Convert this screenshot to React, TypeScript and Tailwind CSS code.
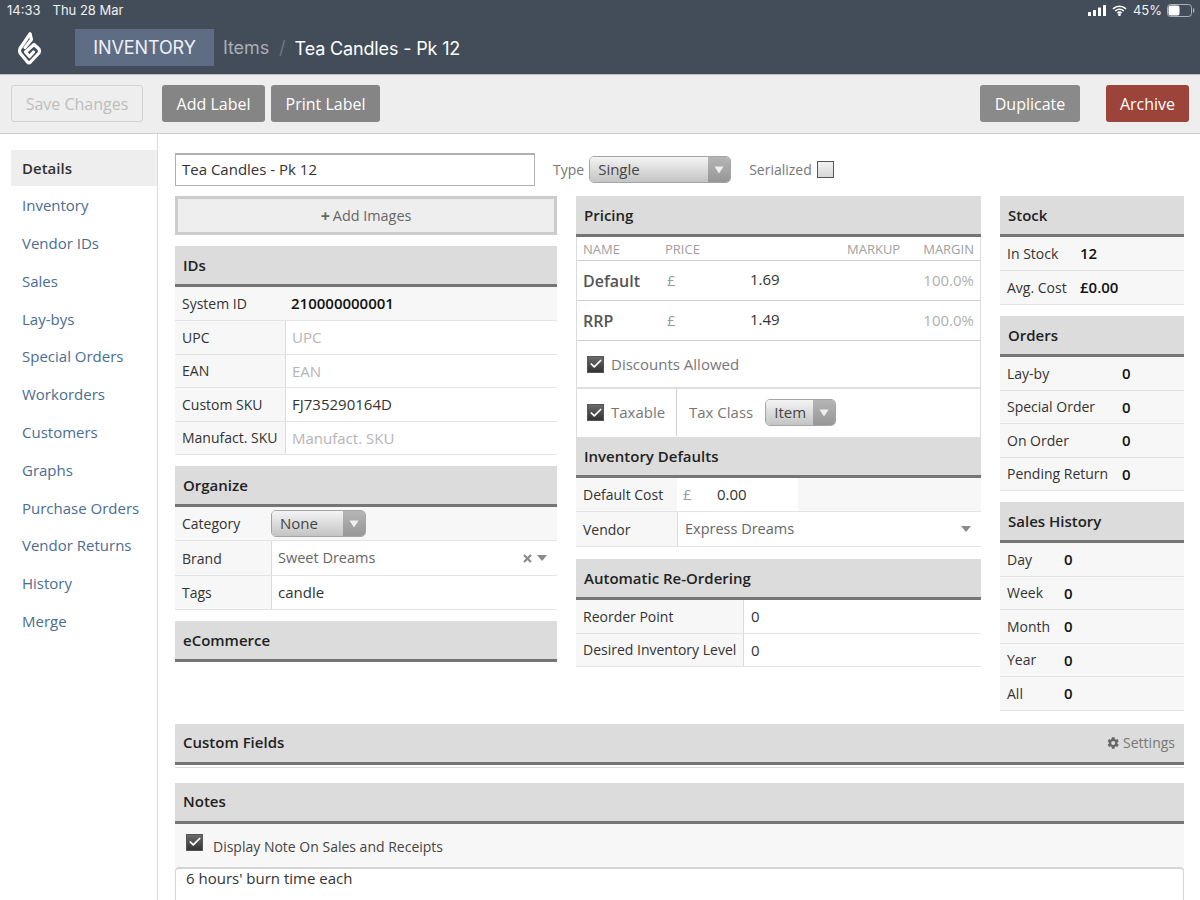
import React from "react";
import { Check } from "lucide-react";

const Head = ({ t, right }: { t: string; right?: React.ReactNode }) => (
  <div className="h-[41px] bg-[#dcdcdc] border-b-[3px] border-[#757575] flex items-center justify-between pl-2 pr-[9px] text-[15px] font-semibold text-[#222]">
    <span>{t}</span>
    {right}
  </div>
);

const Row = ({ label, w, h, value, muted, bold, plain, tight, children }: { label: string; w: number; h: number; value?: string; muted?: boolean; bold?: boolean; plain?: boolean; tight?: boolean; children?: React.ReactNode }) => (
  <div className="flex border-b border-[#e3e3e3] bg-[#f7f7f7] text-[14px] text-[#333]" style={{ height: h }}>
    <div className="pl-[7px] flex items-center shrink-0" style={{ width: w }}>{label}</div>
    <div className={`flex-1 flex items-center text-[15px] ${tight ? "pl-[6px]" : "pl-[7px]"} ${plain ? "" : "bg-white border-l border-[#dcdcdc]"} ${muted ? "text-[#b5b5b5]" : ""} ${bold ? "font-semibold text-[#111]" : ""}`}>
      {children ?? value}
    </div>
  </div>
);

const Select = ({ label, w }: { label: string; w: number }) => (
  <div className="h-[27px] flex rounded-[5px] border border-[#a5a5a5] overflow-hidden text-[15px] text-[#444]" style={{ width: w }}>
    <div className="flex-1 pl-2 flex items-center bg-gradient-to-b from-[#f4f4f4] to-[#c4c4c4]">{label}</div>
    <div className="w-[22px] flex items-center justify-center bg-gradient-to-b from-[#b5b5b5] to-[#979797]">
      <svg width="10" height="8" viewBox="0 0 10 8"><path d="M0.5 0.5h9L5 7.500z" fill="#f0f0f0" /></svg>
    </div>
  </div>
);

const Check16 = () => (
  <div className="w-[17px] h-[17px] flex items-center justify-center bg-gradient-to-b from-[#6b6b6b] to-[#333] border border-[#555] shrink-0">
    <Check size={14} strokeWidth={3} color="#fff" />
  </div>
);

const Caret = () => <svg width="10" height="6" viewBox="0 0 10 6"><path d="M0 0h10L5 6z" fill="#8a8a8a" /></svg>;

const nav = ["Inventory", "Vendor IDs", "Sales", "Lay-bys", "Special Orders", "Workorders", "Customers", "Graphs", "Purchase Orders", "Vendor Returns", "History", "Merge"];

export default function App() {
  return (
    <div className="w-[1200px] h-[900px] overflow-hidden bg-white flex flex-col font-['Open_Sans',sans-serif] text-[#333]">
      <header className="h-[75px] shrink-0 bg-[#434d5a] border-b border-[#b9bcc0] text-white flex flex-col font-['Inter',sans-serif]">
        <div className="h-[21px] flex items-center justify-between pl-[7px] pr-[5px] text-[13px] text-[#eef0f2]">
          <div className="flex gap-[12px]"><span>14:33</span><span>Thu 28 Mar</span></div>
          <div className="flex items-center gap-[6px]">
            <svg width="18" height="11" viewBox="0 0 18 11" fill="#fff"><rect x="0" y="7" width="3" height="4" rx=".5" /><rect x="5" y="5" width="3" height="6" rx=".5" /><rect x="10" y="2.500" width="3" height="8.500" rx=".5" /><rect x="15" y="0" width="3" height="11" rx=".5" /></svg>
            <svg width="15" height="11" viewBox="0 0 15 11" fill="none" stroke="#fff" strokeWidth="1.600"><path d="M1 3.800a9.500 9.500 0 0 1 13 0" /><path d="M3.200 6a6.300 6.300 0 0 1 8.600 0" /><path d="M5.400 8.200a3 3 0 0 1 4.200 0" /><circle cx="7.500" cy="9.700" r=".6" fill="#fff" /></svg>
            <span>45%</span>
            <svg className="-ml-[1px]" width="28" height="13" viewBox="0 0 28 13"><rect x=".5" y=".5" width="24" height="12" rx="3" fill="none" stroke="#aab0b8" /><rect x="1.500" y="1.500" width="11" height="10" rx="2" fill="#fff" /><rect x="26" y="4.500" width="1.300" height="4" fill="#aab0b8" /></svg>
          </div>
        </div>
        <div className="flex items-start pt-[8px]">
          <svg className="ml-[17px] mt-[2px]" width="25" height="35" viewBox="0 0 25 35" fill="none" stroke="#fff" strokeWidth="3.200" strokeLinejoin="round" strokeLinecap="round">
            <path d="M13 3 L3 17.500 Q2 20 3 22 L10.500 31 Q12 32.500 13.500 31 L22 22 Q23 20 22 18 L17 13.500 L8.500 21 L12.500 25.500 L16.500 21" />
            <path d="M13 3 L14.500 8.500 L8 16.500" />
          </svg>
          <div className="ml-[33px] w-[139px] h-[37px] bg-[#5f6d84] flex items-center justify-center text-[18px] tracking-[-0.1px] text-[#eef0f3]">INVENTORY</div>
          <div className="ml-[9px] h-[37px] flex items-center text-[18px] tracking-[-0.1px] text-[#a9afb8]">Items</div>
          <div className="ml-[10px] h-[37px] flex items-center text-[18px] text-[#6d7683]">/</div>
          <div className="ml-[9px] h-[39px] flex items-center text-[18px] tracking-[-0.15px] text-white">Tea Candles - Pk 12</div>
        </div>
      </header>

      <div className="h-[59px] shrink-0 bg-[#eeeeee] border-b border-[#cfcfcf] flex items-center text-[16px] pb-[1px]">
        <div className="ml-[11px] w-[132px] h-[37px] rounded-[3px] border border-[#d2d2d2] text-[#bdbdbd] flex items-center justify-center">Save Changes</div>
        <div className="ml-[19px] w-[103px] h-[37px] rounded-[3px] bg-[#858585] text-white flex items-center justify-center">Add Label</div>
        <div className="ml-[6px] w-[109px] h-[37px] rounded-[3px] bg-[#858585] text-white flex items-center justify-center">Print Label</div>
        <div className="ml-[600px] w-[100px] h-[37px] rounded-[3px] bg-[#8a8a8a] text-white flex items-center justify-center">Duplicate</div>
        <div className="ml-[26px] w-[83px] h-[37px] rounded-[3px] bg-[#9c433a] text-white flex items-center justify-center">Archive</div>
      </div>

      <div className="flex-1 flex min-h-0">
        <nav className="w-[158px] shrink-0 border-r border-[#dcdcdc] pl-[11px] pt-[16px] text-[15px] text-[#4a6d92]">
          <div className="h-[36px] bg-[#eeeeee] pl-[11px] flex items-center text-[#333] font-semibold">Details</div>
          {nav.map((n) => (
            <div key={n} className="h-[37.800px] pl-[11px] pt-[1px] flex items-center first:mt-[1px]">{n}</div>
          ))}
        </nav>

        <main className="flex-1 pl-[17px] pr-[16px] pt-[19px] min-w-0">
          <div className="flex items-start h-[33px]">
            <div className="w-[360px] h-[33px] border border-[#b0b0b0] border-t-[2px] flex items-center pl-[6px] pb-[1px] text-[15px] text-[#333]">Tea Candles - Pk 12</div>
            <div className="flex items-center h-[33px]">
              <span className="ml-[18px] text-[14px] text-[#777]">Type</span>
              <div className="ml-[5px]"><Select label="Single" w={142} /></div>
              <span className="ml-[18px] text-[14px] text-[#777]">Serialized</span>
              <div className="ml-[5px] w-[17px] h-[17px] border border-[#555] bg-gradient-to-b from-[#f2f2f2] to-[#d8d8d8]"></div>
            </div>
          </div>

          <div className="flex mt-[10px] items-start">
            <div className="w-[382px] shrink-0">
              <div className="h-[39px] border-[3px] border-[#cccccc] bg-[#eeeeee] flex items-center justify-center text-[14.400px] text-[#666]"><span className="font-bold text-[16px] leading-none mr-[3px]">+</span><span>Add Images</span></div>
              <div className="mt-[11px]">
                <Head t="IDs" />
                <Row label="System ID" w={110} h={34} value="210000000001" bold plain tight />
                <Row label="UPC" w={110} h={33.500} value="UPC" muted tight />
                <Row label="EAN" w={110} h={33.500} value="EAN" muted tight />
                <Row label="Custom SKU" w={110} h={33.500} value="FJ735290164D" tight />
                <Row label="Manufact. SKU" w={110} h={33.500} value="Manufact. SKU" muted tight />
              </div>
              <div className="mt-[11px]">
                <Head t="Organize" />
                <Row label="Category" w={96} h={34} plain>
                  <div className="-ml-[7px]"><Select label="None" w={95} /></div>
                </Row>
                <Row label="Brand" w={96} h={35} tight>
                  <span className="flex-1 text-[14.500px] text-[#666]">Sweet Dreams</span>
                  <svg className="mr-[5px]" width="9" height="9" viewBox="0 0 9 9" stroke="#8a8a8a" strokeWidth="2.200"><path d="M1 1l7 7M8 1L1 8" /></svg>
                  <span className="mr-[10px] flex"><Caret /></span>
                </Row>
                <Row label="Tags" w={96} h={34} value="candle" tight />
              </div>
              <div className="mt-[11px]"><Head t="eCommerce" /></div>
            </div>

            <div className="w-[405px] shrink-0 ml-[19px]">
              <Head t="Pricing" />
              <div className="border-x border-[#dcdcdc]">
                <div className="h-[24px] flex items-center border-b border-[#cfcfcf] text-[13px] text-[#a0a0a0] px-[6px] pt-[3px]">
                  <span className="w-[82px]">NAME</span><span>PRICE</span>
                  <span className="ml-auto mr-[23px]">MARKUP</span><span>MARGIN</span>
                </div>
                {["Default|1.69", "RRP|1.49"].map((r) => {
                  const [n, p] = r.split("|");
                  return (
                    <div key={n} className="h-[40px] flex items-center border-b border-[#cfcfcf] px-[6px] text-[15px]">
                      <span className="w-[84px] text-[16px] font-semibold text-[#555]">{n}</span>
                      <span className="w-[83px] pb-[1px] text-[#999]">£</span>
                      <span className="pb-[2px] text-[#333]">{p}</span>
                      <span className="ml-auto text-[#b0b0b0]">100.0%</span>
                    </div>
                  );
                })}
                <div className="h-[48px] flex items-center border-b-[2px] border-[#dfdfdf] pl-[10px] text-[15px] text-[#777]">
                  <Check16 /><span className="ml-[7px]">Discounts Allowed</span>
                </div>
                <div className="h-[48px] flex text-[15px] text-[#777] pb-[1px]">
                  <div className="w-[100px] flex items-center pl-[10px] border-r border-[#cfcfcf]"><Check16 /><span className="ml-[7px]">Taxable</span></div>
                  <div className="flex items-center pl-[12px]"><span>Tax Class</span><div className="ml-[12px]"><Select label="Item" w={71} /></div></div>
                </div>
              </div>
              <Head t="Inventory Defaults" />
              <Row label="Default Cost" w={101} h={34} plain>
                <div className="h-full w-[121px] bg-white flex items-center -ml-[7px] pl-[6px] text-[#333]">
                  <span className="w-[34px] text-[#999]">£</span>0.00
                </div>
              </Row>
              <Row label="Vendor" w={101} h={35}>
                <span className="flex-1 text-[14.500px] text-[#666]">Express Dreams</span>
                <span className="mr-[10px] flex"><Caret /></span>
              </Row>
              <div className="mt-[12px]">
                <Head t="Automatic Re-Ordering" />
                <Row label="Reorder Point" w={167} h={33.500} value="0" />
                <Row label="Desired Inventory Level" w={167} h={33.500} value="0" />
              </div>
            </div>

            <div className="w-[184px] shrink-0 ml-[19px]">
              <Head t="Stock" />
              <Row label="In Stock" w={73} h={34} value="12" bold plain />
              <Row label="Avg. Cost" w={73} h={34} value="£0.00" bold plain />
              <div className="mt-[11px]">
                <Head t="Orders" />
                {["Lay-by", "Special Order", "On Order", "Pending Return"].map((l) => (
                  <Row key={l} label={l} w={115} h={33.500} value="0" bold plain />
                ))}
              </div>
              <div className="mt-[11px]">
                <Head t="Sales History" />
                {["Day", "Week", "Month", "Year", "All"].map((l) => (
                  <Row key={l} label={l} w={57} h={33.500} value="0" bold plain />
                ))}
              </div>
            </div>
          </div>

          <div className="mt-[13px] border-b border-[#dcdcdc] pb-[2px]">
            <Head t="Custom Fields" right={
              <span className="flex items-center gap-[3px] text-[14px] font-normal text-[#777]">
                <svg width="14" height="14" viewBox="0 0 24 24" fill="#666"><path d="M19.400 13a7.500 7.500 0 0 0 0-2l2.300-1.800-2.300-4-2.700 1.100a7.500 7.500 0 0 0-1.700-1L14.600 2h-4.600l-.4 3.300a7.500 7.500 0 0 0-1.700 1L5.200 5.200l-2.300 4L5.200 11a7.500 7.500 0 0 0 0 2l-2.300 1.800 2.300 4 2.700-1.100a7.500 7.500 0 0 0 1.700 1l.4 3.300h4.600l.4-3.300a7.500 7.500 0 0 0 1.700-1l2.700 1.100 2.300-4zM12.300 15.500a3.500 3.500 0 1 1 0-7 3.500 3.500 0 0 1 0 7z" /></svg>
                Settings
              </span>
            } />
          </div>

          <div className="mt-[15px]">
            <Head t="Notes" />
            <div className="h-[43px] bg-[#f7f7f7] flex items-start pl-[11px] pt-[10px] text-[14px] text-[#444]">
              <Check16 /><span className="ml-[10px] mt-[2px]">Display Note On Sales and Receipts</span>
            </div>
            <div className="h-[60px] border border-[#d5d5d5] border-t-[2px] rounded-t-[4px] pl-[10px] text-[15px] leading-[18px] text-[#333]">6 hours' burn time each</div>
          </div>
        </main>
      </div>
    </div>
  );
}
